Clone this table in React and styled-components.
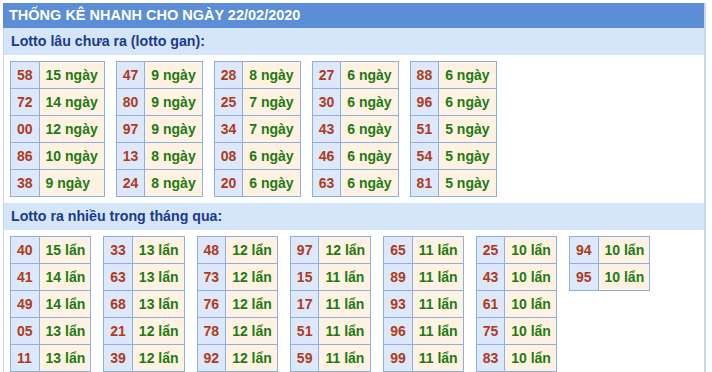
import React from "react";
import styled, { createGlobalStyle } from "styled-components";

const Global = createGlobalStyle`
  html, body { margin: 0; padding: 0; background: #fff; }
  body { font-family: "Liberation Sans", Arial, sans-serif; }
`;

const Wrap = styled.div`
  margin: 3px 0 0 3px;
  width: 703px;
  border-left: 1px solid #c9d6e8;
  border-right: 2px solid #c9d6e8;
  box-sizing: border-box;
`;

const Header = styled.div`
  height: 25px;
  background: #5b8ed6;
  color: #fff;
  font-weight: bold;
  font-size: 14.5px;
  line-height: 25px;
  padding-left: 6px;
  margin-left: -1px;
`;

const SectionTitle = styled.div`
  height: 27px;
  background: #d5e6fa;
  color: #1b3a8c;
  font-weight: bold;
  font-size: 14.2px;
  line-height: 27px;
  padding-left: 7px;
`;

const Tables = styled.div`
  display: flex;
  align-items: flex-start;
  gap: ${(p) => p.$gap}px;
  padding: 6px 6px 6px 6px;
`;

const Table = styled.table`
  border-collapse: collapse;
  border: 1px solid #8eafe0;
`;

const Cell = styled.td`
  border: 1px solid #8eafe0;
  height: 26px;
  padding: 0 ${(p) => (p.$num ? 6 : p.$right)}px 0 6px;
  font-size: 14px;
  font-weight: bold;
  white-space: nowrap;
  background: ${(p) => (p.$num ? "#dde9fa" : "#fef3e2")};
  color: ${(p) => (p.$num ? "#b03a1c" : "#1e7a12")};
  text-align: left;
`;

const gan = [
  [["58", 15], ["72", 14], ["00", 12], ["86", 10], ["38", 9]],
  [["47", 9], ["80", 9], ["97", 9], ["13", 8], ["24", 8]],
  [["28", 8], ["25", 7], ["34", 7], ["08", 6], ["20", 6]],
  [["27", 6], ["30", 6], ["43", 6], ["46", 6], ["63", 6]],
  [["88", 6], ["96", 6], ["51", 5], ["54", 5], ["81", 5]],
];

const nhieu = [
  [["40", 15], ["41", 14], ["49", 14], ["05", 13], ["11", 13]],
  [["33", 13], ["63", 13], ["68", 13], ["21", 12], ["39", 12]],
  [["48", 12], ["73", 12], ["76", 12], ["78", 12], ["92", 12]],
  [["97", 12], ["15", 11], ["17", 11], ["51", 11], ["59", 11]],
  [["65", 11], ["89", 11], ["93", 11], ["96", 11], ["99", 11]],
  [["25", 10], ["43", 10], ["61", 10], ["75", 10], ["83", 10]],
  [["94", 10], ["95", 10]],
];

function Group({ data, unit, gap, right }) {
  return (
    <Tables $gap={gap}>
      {data.map((rows, i) => (
        <Table key={i}>
          <tbody>
            {rows.map(([n, c]) => (
              <tr key={n}>
                <Cell $num>{n}</Cell>
                <Cell $right={right}>{c} {unit}</Cell>
              </tr>
            ))}
          </tbody>
        </Table>
      ))}
    </Tables>
  );
}

export default function App() {
  return (
    <>
      <Global />
      <Wrap>
        <Header>THỐNG KÊ NHANH CHO NGÀY 22/02/2020</Header>
        <SectionTitle>Lotto lâu chưa ra (lotto gan):</SectionTitle>
        <Group data={gan} unit="ngày" gap={11} right={6} />
        <SectionTitle>Lotto ra nhiều trong tháng qua:</SectionTitle>
        <Group data={nhieu} unit="lẩn" gap={12} right={5} />
      </Wrap>
    </>
  );
}
